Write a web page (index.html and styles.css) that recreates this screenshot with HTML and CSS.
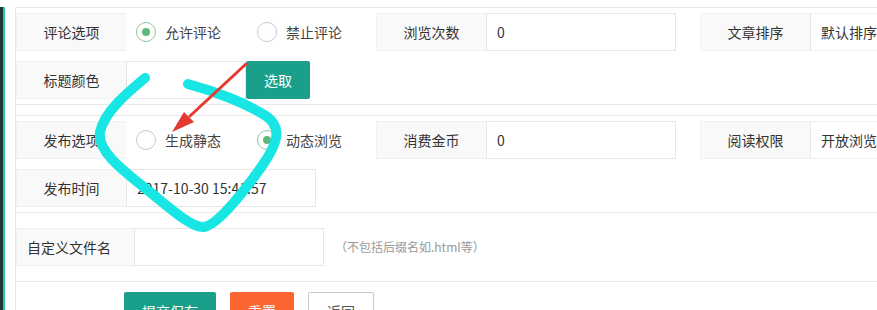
FILE: index.html
```html
<!DOCTYPE html>
<html lang="zh-CN">
<head>
<meta charset="utf-8">
<title>表单</title>
<link rel="stylesheet" href="styles.css">
</head>
<body>
<div class="page">
  <div class="inner">
    <div class="panel">
      <div class="block block-first">
        <div class="row">
          <div class="label">评论选项</div>
          <div class="radios">
            <span class="radio checked"><i class="dot"></i>允许评论</span>
            <span class="radio"><i class="dot"></i>禁止评论</span>
          </div>
          <div class="label">浏览次数</div>
          <div class="input">0</div>
          <div class="label label-far">文章排序</div>
          <div class="input select">默认排序</div>
        </div>
        <div class="row">
          <div class="label">标题颜色</div>
          <div class="input input-short"></div>
          <div class="btn btn-teal">选取</div>
        </div>
      </div>
      <div class="block">
        <div class="row">
          <div class="label">发布选项</div>
          <div class="radios">
            <span class="radio"><i class="dot"></i>生成静态</span>
            <span class="radio checked"><i class="dot"></i>动态浏览</span>
          </div>
          <div class="label">消费金币</div>
          <div class="input">0</div>
          <div class="label label-far">阅读权限</div>
          <div class="input select">开放浏览</div>
        </div>
        <div class="row">
          <div class="label">发布时间</div>
          <div class="input">2017-10-30 15:41:57</div>
        </div>
      </div>
      <div class="row row-file">
        <div class="label label-wide">自定义文件名</div>
        <div class="input"></div>
        <div class="hint">（不包括后缀名如.html等）</div>
      </div>
      <div class="actions">
        <div class="btn btn-teal">提交保存</div>
        <div class="btn btn-orange">重置</div>
        <div class="btn btn-plain">返回</div>
      </div>
    </div>
  </div>
</div>
<svg class="annot" width="877" height="310" viewBox="0 0 877 310">
  <path class="cyan" d="M145,78 C128,92 104,112 100,132 C97,152 125,172 150,192 C172,210 192,228 204,227 C218,225 245,190 262,166 C276,146 284,128 266,116 C246,103 214,91 188,84"/>
  <line class="redline" x1="246" y1="64" x2="190" y2="116"/>
  <polygon class="redhead" points="172,132 184,112 194,122"/>
</svg>
</body>
</html>
```
FILE: styles.css
```css
html, body {
  margin: 0;
  padding: 0;
}
body {
  position: relative;
  width: 877px;
  height: 310px;
  overflow: hidden;
  background: #fff;
  font-family: "Noto Sans CJK SC", "Microsoft YaHei", sans-serif;
  font-size: 14px;
  color: #333;
}
.page {
  border-left: 3px solid #1d363a;
  height: 310px;
}
.inner {
  border-left: 2px solid #22c8a0;
  padding-left: 10px;
  height: 310px;
}
.panel {
  margin-top: 7px;
  border-top: 1px solid #e8e8e8;
  border-left: 1px solid #e6e6e6;
  min-height: 303px;
}
.block {
  padding: 5px 0;
  border-bottom: 1px solid #e8e8e8;
}
.block + .block {
  margin-top: 10px;
  border-top: 1px solid #e8e8e8;
}
.row {
  display: flex;
  height: 38px;
  white-space: nowrap;
}
.row + .row {
  margin-top: 10px;
}
.label {
  flex: none;
  box-sizing: border-box;
  width: 110px;
  height: 38px;
  line-height: 36px;
  text-align: center;
  background: #f9f9f9;
  border: 1px solid #f1f1f1;
  border-right: none;
  color: #333;
}
.label-far {
  margin-left: 24px;
}
.label-wide {
  width: 118px;
  text-align: left;
  padding-left: 10px;
}
.input {
  flex: none;
  box-sizing: border-box;
  width: 190px;
  height: 38px;
  line-height: 36px;
  padding-left: 10px;
  border: 1px solid #e6e6e6;
  background: #fff;
  color: #333;
}
.input-short {
  width: 120px;
}
.select {
  border-top-color: #f0f0f0;
  border-bottom-color: #f0f0f0;
}
.radios {
  flex: none;
  box-sizing: border-box;
  width: 250px;
  display: flex;
  align-items: center;
  padding-left: 10px;
}
.radio {
  display: flex;
  align-items: center;
  margin-right: 36px;
  color: #444;
}
.dot {
  box-sizing: border-box;
  width: 20px;
  height: 20px;
  border: 1.5px solid #c9c9c9;
  border-radius: 50%;
  margin-right: 9px;
  position: relative;
}
.radio.checked .dot {
  border-color: #8fc59c;
}
.radio.checked .dot::after {
  content: "";
  position: absolute;
  left: 50%;
  top: 50%;
  width: 8px;
  height: 8px;
  margin: -4px 0 0 -4px;
  border-radius: 50%;
  background: #5fb878;
}
.btn {
  flex: none;
  box-sizing: border-box;
  height: 38px;
  line-height: 38px;
  padding: 0 18px;
  border-radius: 2px;
  color: #fff;
  font-size: 14px;
}
.btn-teal {
  background: #1aa08a;
}
.btn-orange {
  background: #fb6630;
}
.btn-plain {
  background: #fff;
  color: #555;
  border: 1px solid #c9c9c9;
  line-height: 36px;
}
.row-file {
  margin-top: 15px;
  margin-bottom: 15px;
}
.hint {
  margin-left: 11px;
  line-height: 38px;
  font-size: 12px;
  color: #999;
}
.actions {
  border-top: 1px solid #e8e8e8;
  padding: 10px 0 0 108px;
  display: flex;
  gap: 14px;
}
.annot {
  position: absolute;
  left: 0;
  top: 0;
  pointer-events: none;
}
.cyan {
  fill: none;
  stroke: #17e6e4;
  stroke-width: 10;
  stroke-linecap: round;
  stroke-linejoin: round;
}
.redline {
  stroke: #e63a30;
  stroke-width: 3;
  stroke-linecap: round;
}
.redhead {
  fill: #e63a30;
}
```
